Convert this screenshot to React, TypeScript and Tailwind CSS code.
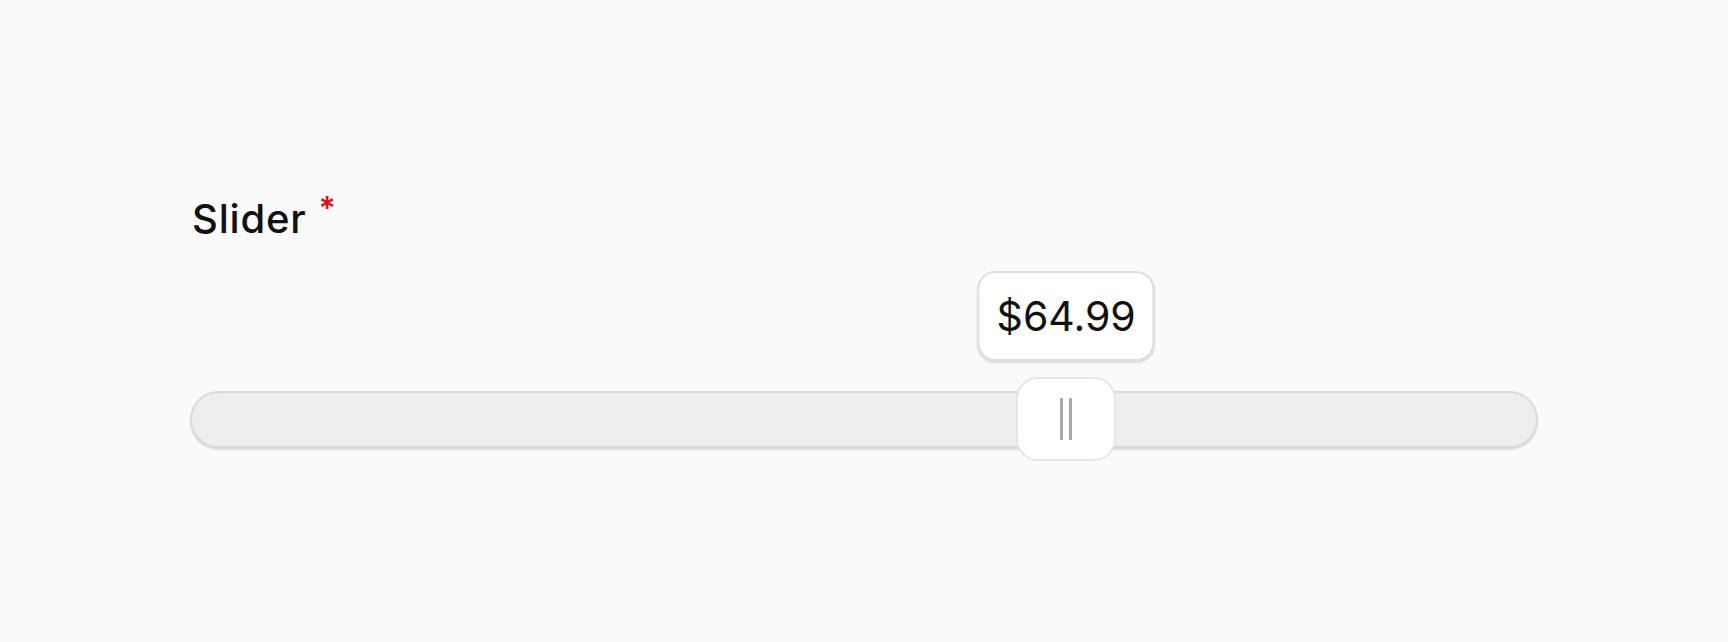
export default function App() {
  const value = 64.99;
  const pct = 65;

  return (
    <div
      className="min-h-[642px] w-full bg-[#fafafa] text-[#111111]"
      style={{ fontFamily: "Inter, 'Noto Sans', sans-serif" }}
    >
      <div className="mx-auto w-[1348px] pt-[192px]">
        <div className="flex h-[54px] items-start">
          <span className="pl-[2px] text-[40px] font-medium leading-[54px] tracking-[0.02em]">Slider</span>
          <span className="ml-[12px] mt-[1px] text-[32px] font-semibold leading-none text-[#e0101a]">*</span>
        </div>

        <div className="relative mt-[25px] pt-[120px]">
          <div
            className="absolute top-0 flex h-[90px] -translate-x-1/2 items-center rounded-[18px] border-2 border-[#e0e0e0] bg-white px-[17px] shadow-[0_2px_2px_rgba(0,0,0,0.12)]"
            style={{ left: `${pct}%` }}
          >
            <span className="text-[41px] leading-none">${value.toFixed(2)}</span>
          </div>

          <div className="relative h-[57px] rounded-full border-2 border-[#dadada] bg-[#eeeeee] shadow-[0_2px_2px_rgba(0,0,0,0.12)]">
            <div
              className="absolute left-0 top-[-16px] flex h-[84px] w-[100px] -translate-x-1/2 items-center justify-center gap-[6px] rounded-[22px] border-2 border-[#e6e6e6] bg-white"
              style={{ left: `${pct}%` }}
            >
              <span className="h-[42px] w-[3px] bg-[#a8a8ad]" />
              <span className="h-[42px] w-[3px] bg-[#a8a8ad]" />
            </div>
          </div>
        </div>
      </div>
    </div>
  );
}
